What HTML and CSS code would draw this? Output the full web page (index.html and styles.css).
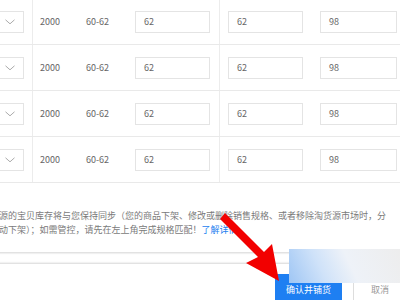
FILE: index.html
```html
<!DOCTYPE html>
<html lang="zh-CN">
<head>
<meta charset="utf-8">
<title>规格设置</title>
<link rel="stylesheet" href="styles.css">
</head>
<body>
<div class="page">
  <div class="table">
    <div class="row">
      <div class="cell c1"><div class="select"><svg class="chev" width="10" height="6" viewBox="0 0 10 6"><polyline points="0.5,0.8 5,4.8 9.5,0.8" fill="none" stroke="#aaa" stroke-width="1"/></svg></div></div>
      <div class="cell c2"><span class="num">2000</span><span class="range">60-62</span><div class="input">62</div></div>
      <div class="cell c3"><div class="input">62</div><div class="input wide">98</div></div>
    </div>
    <div class="row">
      <div class="cell c1"><div class="select"><svg class="chev" width="10" height="6" viewBox="0 0 10 6"><polyline points="0.5,0.8 5,4.8 9.5,0.8" fill="none" stroke="#aaa" stroke-width="1"/></svg></div></div>
      <div class="cell c2"><span class="num">2000</span><span class="range">60-62</span><div class="input">62</div></div>
      <div class="cell c3"><div class="input">62</div><div class="input wide">98</div></div>
    </div>
    <div class="row">
      <div class="cell c1"><div class="select"><svg class="chev" width="10" height="6" viewBox="0 0 10 6"><polyline points="0.5,0.8 5,4.8 9.5,0.8" fill="none" stroke="#aaa" stroke-width="1"/></svg></div></div>
      <div class="cell c2"><span class="num">2000</span><span class="range">60-62</span><div class="input">62</div></div>
      <div class="cell c3"><div class="input">62</div><div class="input wide">98</div></div>
    </div>
    <div class="row">
      <div class="cell c1"><div class="select"><svg class="chev" width="10" height="6" viewBox="0 0 10 6"><polyline points="0.5,0.8 5,4.8 9.5,0.8" fill="none" stroke="#aaa" stroke-width="1"/></svg></div></div>
      <div class="cell c2"><span class="num">2000</span><span class="range">60-62</span><div class="input">62</div></div>
      <div class="cell c3"><div class="input">62</div><div class="input wide">98</div></div>
    </div>
  </div>
  <div class="notice">
    <p class="line">源的宝贝库存将与您保持同步（您的商品下架、修改或删除销售规格、或者移除淘货源市场时，分</p>
    <p class="line">动下架）；如需管控，请先在左上角完成规格匹配！<a class="link">了解详情</a></p>
  </div>
  <div class="footer">
    <button class="btn primary">确认并铺货</button>
    <button class="btn">取消</button>
  </div>
</div>
<div class="blur"></div>
<svg class="arrow" width="400" height="300" viewBox="0 0 400 300">
  <polygon fill="#f20000" points="220,219 225,213 264,252 272,244 279,281 246,263 258,257"/>
</svg>
</body>
</html>
```
FILE: styles.css
```css
html, body {
  margin: 0;
  padding: 0;
  background: #fff;
  width: 400px;
  height: 300px;
  overflow: hidden;
}
body {
  position: relative;
  font-family: "Noto Sans CJK SC", "Microsoft YaHei", sans-serif;
  font-size: 9px;
  color: #666;
}
.page {
  margin-top: -1px;
}
.table {
  display: flex;
  flex-direction: column;
}
.row {
  display: grid;
  grid-template-columns: 33px 187px 1fr;
  height: 46px;
  box-sizing: border-box;
  border-bottom: 1px solid #e9e9e9;
}
.cell {
  display: flex;
  align-items: center;
  box-sizing: border-box;
}
.c1, .c2 {
  border-right: 1px solid #ececec;
}
.select {
  margin-left: -40px;
  width: 64px;
  height: 22px;
  box-sizing: border-box;
  border: 1px solid #e4e4e4;
  display: flex;
  align-items: center;
  justify-content: flex-end;
  padding-right: 8px;
}
.chev {
  display: block;
}
.c2 {
  padding-left: 7px;
}
.num {
  width: 46px;
}
.range {
  width: 49px;
}
.input {
  width: 75px;
  height: 22px;
  box-sizing: border-box;
  border: 1px solid #e4e4e4;
  padding-left: 8px;
  display: flex;
  align-items: center;
}
.input.wide {
  width: 77px;
}
.c3 {
  padding-left: 8px;
  gap: 17px;
}
.notice {
  padding: 26px 0 15px;
  margin-left: -1px;
  border-bottom: 1px solid #e2e2e2;
  box-shadow: 0 1px 1px #f0f0f0;
  color: #7a7a7a;
}
.line {
  margin: 0;
  line-height: 14px;
  white-space: nowrap;
}
.link {
  color: #1d7ff0;
}
.footer {
  margin-top: 10px;
  border-top: 1px solid #e2e2e2;
  box-shadow: 0 -1px 1px #f2f2f2;
  padding: 10px 0 0 275px;
  display: flex;
  gap: 11px;
}
.btn {
  height: 30px;
  font-family: inherit;
  font-size: 9px;
  border: 1px solid #ddd;
  background: #fff;
  color: #999;
  padding: 0;
  width: 54px;
  flex: none;
}
.btn.primary {
  width: 67px;
  background: #1e7ff2;
  border-color: #1e7ff2;
  color: #fff;
}
.blur {
  position: absolute;
  left: 289px;
  top: 249px;
  width: 111px;
  height: 34px;
  background: linear-gradient(65deg, #9fc6f4 0%, #cfe2f9 30%, #eef2f8 55%, #ededed 100%);
}
.arrow {
  position: absolute;
  left: 0;
  top: 0;
}
```
